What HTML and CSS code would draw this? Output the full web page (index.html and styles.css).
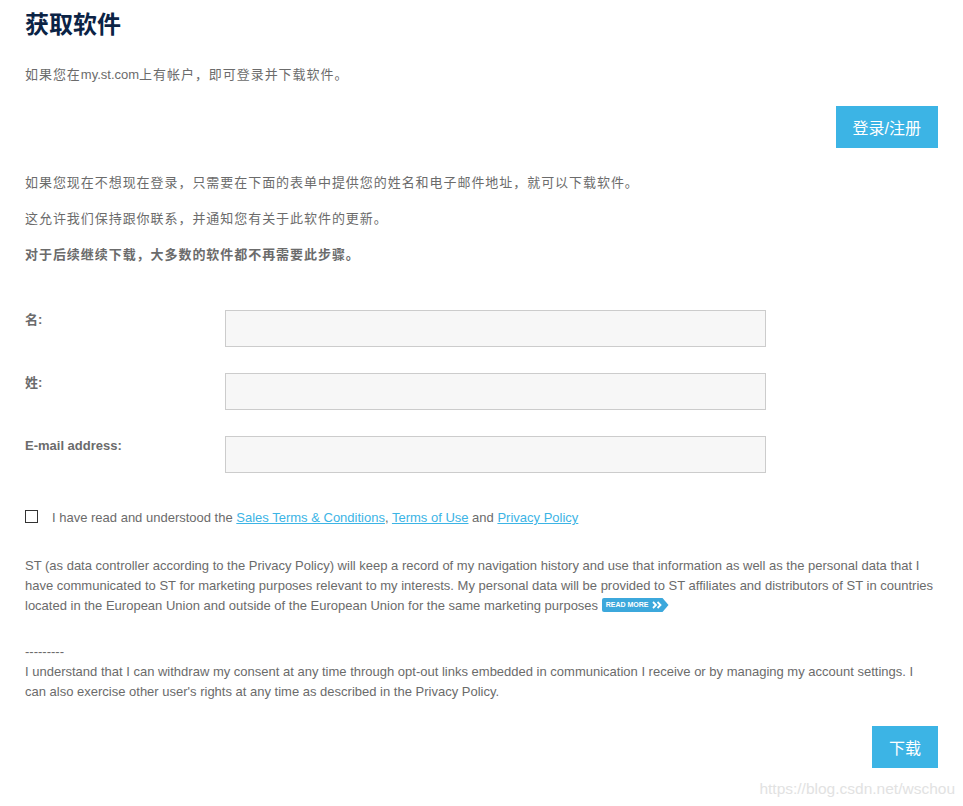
FILE: index.html
```html
<!DOCTYPE html>
<html lang="zh-CN">
<head>
    <meta charset="UTF-8">
    <meta name="viewport" content="width=device-width, initial-scale=1.0">
    <title>获取软件</title>
    <link rel="stylesheet" href="styles.css">
</head>
<body>
    <h1 class="title">获取软件</h1>
    <p class="intro zh">如果您在<span class="latin">my.st.com</span>上有帐户，即可登录并下载软件。</p>

    <div class="actions">
        <button class="btn">登录/注册</button>
    </div>

    <div class="notes zh">
        <p>如果您现在不想现在登录，只需要在下面的表单中提供您的姓名和电子邮件地址，就可以下载软件。</p>
        <p>这允许我们保持跟你联系，并通知您有关于此软件的更新。</p>
        <p class="strong">对于后续继续下载，大多数的软件都不再需要此步骤。</p>
    </div>

    <form class="form">
        <div class="row">
            <label for="first">名:</label>
            <input type="text" id="first">
        </div>
        <div class="row">
            <label for="last">姓:</label>
            <input type="text" id="last">
        </div>
        <div class="row">
            <label for="email">E-mail address:</label>
            <input type="text" id="email">
        </div>

        <div class="agree">
            <span class="box"></span>
            <span>I have read and understood the <a href="#">Sales Terms &amp; Conditions</a>, <a href="#">Terms of Use</a> and <a href="#">Privacy Policy</a></span>
        </div>

        <p class="legal">ST (as data controller according to the Privacy Policy) will keep a record of my navigation history and use that information as well as the personal data that I have communicated to ST for marketing purposes relevant to my interests. My personal data will be provided to ST affiliates and distributors of ST in countries located in the European Union and outside of the European Union for the same marketing purposes <span class="more">READ MORE<svg width="10" height="8" viewBox="0 0 10 8"><path d="M1 1l3 3-3 3M5.5 1l3 3-3 3" fill="none" stroke="#fff" stroke-width="1.8"/></svg></span></p>

        <p class="legal withdraw">---------<br>I understand that I can withdraw my consent at any time through opt-out links embedded in communication I receive or by managing my account settings. I can also exercise other user's rights at any time as described in the Privacy Policy.</p>

        <div class="actions bottom">
            <button type="button" class="btn">下载</button>
        </div>
    </form>

    <div class="watermark">https://blog.csdn.net/wschou</div>
</body>
</html>
```

FILE: styles.css
```css
body {
    margin: 0;
    padding: 0 25px;
    font-family: "Liberation Sans", Arial, "Noto Sans CJK SC", sans-serif;
    font-size: 13px;
    color: #6b6b6b;
    background: #ffffff;
}
.title {
    margin: 10px 0 0;
    font-size: 24px;
    line-height: 30px;
    color: #0b2345;
    font-weight: bold;
}
.zh {
    letter-spacing: 0.95px;
}
.zh .latin {
    letter-spacing: 0;
}
.intro {
    margin: 25px 0 0;
    line-height: 20px;
}
.actions {
    display: flex;
    justify-content: flex-end;
    margin-top: 21px;
}
.btn {
    background-color: #3cb4e5;
    color: #ffffff;
    border: none;
    height: 42px;
    padding: 0 17px;
    font-family: "Liberation Sans", Arial, "Noto Sans CJK SC", sans-serif;
    font-size: 16px;
    cursor: pointer;
}
.notes {
    margin-top: 25px;
}
.notes p {
    margin: 0 0 16px;
    line-height: 20px;
}
.notes .strong {
    font-weight: bold;
}
.form {
    margin-top: 45px;
}
.row {
    display: flex;
    align-items: flex-start;
    margin-bottom: 26px;
}
.row label {
    width: 200px;
    flex-shrink: 0;
    font-weight: bold;
    line-height: 20px;
}
.row input {
    width: 541px;
    height: 37px;
    box-sizing: border-box;
    background: #f7f7f7;
    border: 1px solid #cccccc;
    margin: 0;
}
.agree {
    display: flex;
    align-items: center;
    margin-top: 35px;
    line-height: 20px;
}
.box {
    width: 11px;
    height: 11px;
    border: 1px solid #333;
    margin-right: 14px;
    margin-top: -3px;
}
a {
    color: #3cb4e5;
}
.legal {
    margin: 28px 0 0;
    padding-right: 3px;
    line-height: 20px;
}
.withdraw {
    margin-top: 26px;
}
.more {
    display: inline-flex;
    align-items: center;
    gap: 3px;
    height: 14px;
    box-sizing: border-box;
    background: #3ca8dc;
    color: #ffffff;
    font-size: 7px;
    font-weight: bold;
    padding: 0 7px 0 4px;
    vertical-align: 3px;
    border-radius: 2px 0 0 2px;
    clip-path: polygon(0 0, calc(100% - 6px) 0, 100% 50%, calc(100% - 6px) 100%, 0 100%);
}
.bottom {
    margin-top: 24px;
}
.watermark {
    text-align: right;
    margin-top: 12px;
    margin-right: -17px;
    font-size: 15.5px;
    color: #e2e2e2;
}
```
